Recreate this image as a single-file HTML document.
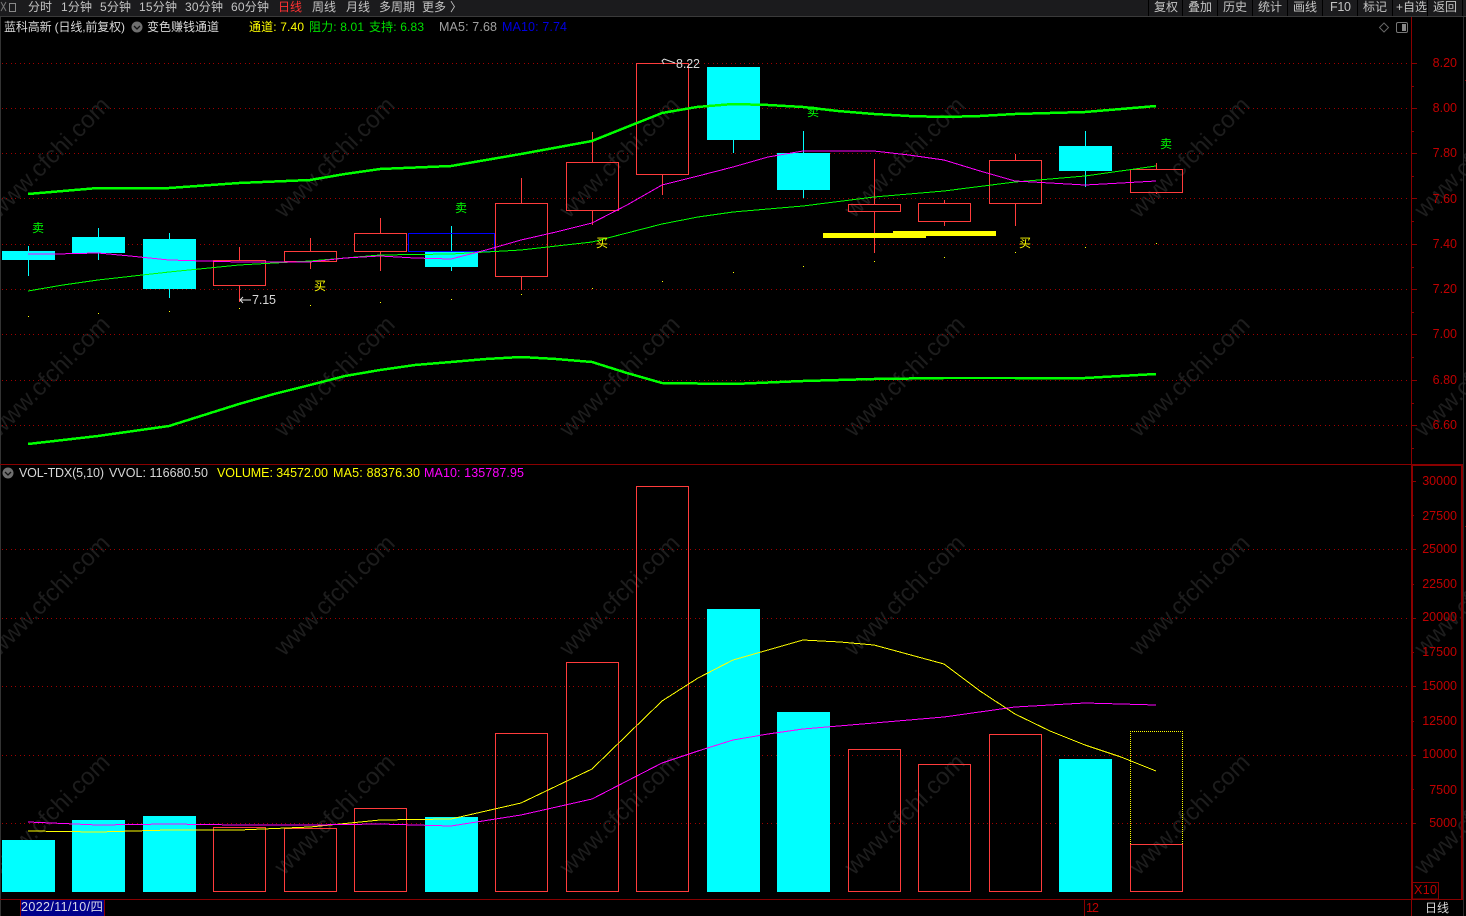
<!DOCTYPE html>
<html><head><meta charset="utf-8"><style>
html,body{margin:0;padding:0;background:#000;width:1466px;height:916px;overflow:hidden}
svg{display:block;position:absolute;left:0;top:0}
text{font-family:"Liberation Sans","Noto Sans CJK SC",sans-serif;font-size:12px}
.l{font-size:12.5px}
.wm text{font-size:24px;fill:#1d1d1d}
.tb{fill:#c4c4c4}
.ax{fill:#c00000;font-size:12.5px}
.ax text{fill:#c00000;font-size:12.5px}
.g{stroke:#a00000;stroke-width:1;stroke-dasharray:1 3 1 4;fill:none}
.r{fill:none;stroke:#ff3c3c;stroke-width:1}
.c{fill:#0ff;stroke:none}
.cw{stroke:#0ff;stroke-width:1}
.rw{stroke:#ff3c3c;stroke-width:1}
.t{stroke:#8a0000;stroke-width:1}
</style></head><body>
<svg width="1466" height="916" viewBox="0 0 1466 916" xmlns="http://www.w3.org/2000/svg">
<g class="wm">
<text transform="translate(-1,219) rotate(-45)">www.cfchi.com</text>
<text transform="translate(284,219) rotate(-45)">www.cfchi.com</text>
<text transform="translate(569,219) rotate(-45)">www.cfchi.com</text>
<text transform="translate(854,219) rotate(-45)">www.cfchi.com</text>
<text transform="translate(1139,219) rotate(-45)">www.cfchi.com</text>
<text transform="translate(1424,219) rotate(-45)">www.cfchi.com</text>
<text transform="translate(-1,438) rotate(-45)">www.cfchi.com</text>
<text transform="translate(284,438) rotate(-45)">www.cfchi.com</text>
<text transform="translate(569,438) rotate(-45)">www.cfchi.com</text>
<text transform="translate(854,438) rotate(-45)">www.cfchi.com</text>
<text transform="translate(1139,438) rotate(-45)">www.cfchi.com</text>
<text transform="translate(1424,438) rotate(-45)">www.cfchi.com</text>
<text transform="translate(-1,657) rotate(-45)">www.cfchi.com</text>
<text transform="translate(284,657) rotate(-45)">www.cfchi.com</text>
<text transform="translate(569,657) rotate(-45)">www.cfchi.com</text>
<text transform="translate(854,657) rotate(-45)">www.cfchi.com</text>
<text transform="translate(1139,657) rotate(-45)">www.cfchi.com</text>
<text transform="translate(1424,657) rotate(-45)">www.cfchi.com</text>
<text transform="translate(-1,876) rotate(-45)">www.cfchi.com</text>
<text transform="translate(284,876) rotate(-45)">www.cfchi.com</text>
<text transform="translate(569,876) rotate(-45)">www.cfchi.com</text>
<text transform="translate(854,876) rotate(-45)">www.cfchi.com</text>
<text transform="translate(1139,876) rotate(-45)">www.cfchi.com</text>
<text transform="translate(1424,876) rotate(-45)">www.cfchi.com</text>
</g>

<!-- toolbar -->
<rect x="0" y="0" width="1466" height="16" fill="#1b1b1d"/>
<rect x="0" y="16" width="1466" height="1" fill="#3a3a3a"/>
<path d="M1 2l5 9M6 2l-5 9" fill="none" stroke="#777"/><rect x="9.500" y="3.500" width="6" height="8" fill="none" stroke="#888"/>
<g class="tb">
<text x="28" y="11">分时</text><text x="61" y="11" textLength="31">1分钟</text><text x="100" y="11" textLength="31">5分钟</text><text x="139" y="11" textLength="38">15分钟</text><text x="185" y="11" textLength="38">30分钟</text><text x="231" y="11" textLength="38">60分钟</text>
<text x="278" y="11" style="fill:#ff3232">日线</text>
<text x="312" y="11">周线</text><text x="346" y="11">月线</text><text x="379" y="11">多周期</text><text x="422" y="11">更多</text><text x="450" y="11">〉</text>
<text x="1154" y="11">复权</text><text x="1188" y="11">叠加</text><text x="1223" y="11">历史</text><text x="1258" y="11">统计</text><text x="1293" y="11">画线</text><text x="1330" y="11" textLength="21" class="l">F10</text><text x="1363" y="11">标记</text><text x="1396" y="11" textLength="31">+自选</text><text x="1433" y="11">返回</text>
</g>
<g stroke="#000" stroke-width="1" shape-rendering="crispEdges">
<path d="M1148.500 0V16M1182.500 0V16M1217.500 0V16M1252.500 0V16M1287.500 0V16M1322.500 0V16M1357.500 0V16M1392.500 0V16M1427.500 0V16M1462.500 0V16"/>
</g>

<g shape-rendering="crispEdges">
<!-- frame -->
<rect x="0" y="17" width="1" height="899" fill="#333"/>
<rect x="1463" y="17" width="1" height="899" fill="#2c2c2c"/>
<rect x="1465" y="80" width="1" height="1" fill="#8a0000"/>
<rect x="1465" y="526" width="1" height="1" fill="#8a0000"/>
<rect x="1411" y="17" width="1" height="447" fill="#8a0000"/>
<rect x="0" y="464" width="1463" height="1" fill="#8a0000"/>
<rect x="1411" y="464" width="2" height="435" fill="#8a0000"/>
<rect x="1411" y="465" width="51" height="1" fill="#8a0000"/>
<rect x="1461" y="465" width="2" height="434" fill="#8a0000"/>
<rect x="0" y="899" width="1463" height="1" fill="#8a0000"/>
<rect x="1411" y="899" width="1" height="17" fill="#8a0000"/>
<rect x="1084" y="900" width="1" height="16" fill="#8a0000"/>

<!-- grid -->
<path class="g" d="M2 63.500H1410M2 108.500H1410M2 153.500H1410M2 198.500H1410M2 244.500H1410M2 289.500H1410M2 334.500H1410M2 380.500H1410M2 425.500H1410"/>
<path class="g" d="M2 549.500H1408M2 618.500H1408M2 686.500H1408M2 755.500H1408M2 823.500H1408"/>

<!-- ticks -->
<path class="t" d="M1411 63.500h6M1411 86.500h3M1411 108.500h6M1411 131.500h3M1411 153.500h6M1411 176.500h3M1411 198.500h6M1411 221.500h3M1411 244.500h6M1411 267.500h3M1411 289.500h6M1411 312.500h3M1411 334.500h6M1411 357.500h3M1411 380.500h6M1411 403.500h3M1411 425.500h6M1411 448.500h3"/>
<path class="t" d="M1411 481.500h5M1411 515.500h3M1411 549.500h5M1411 584.500h3M1411 618.500h5M1411 652.500h3M1411 686.500h5M1411 721.500h3M1411 755.500h5M1411 789.500h3M1411 823.500h5"/>

<!-- price candles -->
<path class="cw" d="M28.500 246V276M98.500 228V260M169.500 233V298M451.500 226V271M733.500 140V153M803.500 131V198M1085.500 131V187"/>
<rect class="c" x="2" y="251" width="53" height="9"/>
<rect class="c" x="72" y="237" width="53" height="16"/>
<rect class="c" x="143" y="239" width="53" height="50"/>
<rect class="c" x="425" y="252" width="53" height="15"/>
<rect class="c" x="707" y="67" width="53" height="73"/>
<rect class="c" x="777" y="153" width="53" height="37"/>
<rect class="c" x="1059" y="146" width="53" height="25"/>
<path class="rw" d="M239.500 247V260M239.500 285V302M310.500 238V251M310.500 261V269M380.500 218V233M380.500 251V271M521.500 178V203M521.500 276V290M592.500 132V162M592.500 210V225M662.500 174V195M874.500 159V204M874.500 211V253M944.500 200V203M944.500 221V226M1015.500 154V160M1015.500 203V226M1156.500 163V169M1156.500 192V194"/>
<rect class="r" x="213.500" y="260.500" width="52" height="25"/>
<rect class="r" x="284.500" y="251.500" width="52" height="10"/>
<rect class="r" x="354.500" y="233.500" width="52" height="18"/>
<rect x="408.500" y="233.500" width="86" height="18" fill="none" stroke="#0000ff"/>
<rect class="r" x="495.500" y="203.500" width="52" height="73"/>
<rect class="r" x="566.500" y="162.500" width="52" height="48"/>
<rect class="r" x="636.500" y="63.500" width="52" height="111"/>
<rect class="r" x="848.500" y="204.500" width="52" height="7"/>
<rect class="r" x="918.500" y="203.500" width="52" height="18"/>
<rect class="r" x="989.500" y="160.500" width="52" height="43"/>
<rect class="r" x="1130.500" y="169.500" width="52" height="23"/>

<!-- yellow bars -->
<rect x="823" y="233" width="103" height="5" fill="#ff0"/>
<rect x="893" y="231" width="103" height="5" fill="#ff0"/>

<!-- yellow dots -->
<path fill="#ff0" d="M28 316h1v1h-1zM98 313h1v1h-1zM169 311h1v1h-1zM239 308h1v1h-1zM310 305h1v1h-1zM380 302h1v1h-1zM451 299h1v1h-1zM521 294h1v1h-1zM592 288h1v1h-1zM662 281h1v1h-1zM733 272h1v1h-1zM803 266h1v1h-1zM874 261h1v1h-1zM944 257h1v1h-1zM1015 252h1v1h-1zM1085 247h1v1h-1zM1156 243h1v1h-1z"/>

<!-- price lines -->
<polyline fill="none" stroke="#00ff00" stroke-width="2.500" points="28,194 63,191 98,188 169,188 239,183 310,180 345,174 380,169 451,166 521,154 592,141 627,127 662,113 697,107 733,104 768,105 803,107 838,111 874,114 909,116 944,117 980,116 1015,114 1085,112 1121,109 1156,106"/>
<polyline fill="none" stroke="#00ff00" stroke-width="2.500" points="28,444 98,436 169,426 204,415 239,404 274,394 310,385 345,376 380,370 415,365 451,362 486,359 521,357 556,359 592,362 627,373 662,383 733,384 803,381 874,379 944,378 1015,378 1085,378 1156,374"/>
<polyline fill="none" stroke="#00ff00" stroke-width="1" points="28,291 63,285 98,280 169,272 239,265 310,261 380,255 451,254 521,250 592,242 627,233 662,224 698,217 733,212 803,206 874,197 944,191 1015,182 1085,176 1156,166"/>
<polyline fill="none" stroke="#ff00ff" stroke-width="1" points="28,254 55,254 98,253 130,256 169,260 204,261 239,262 310,262 345,258 380,256 415,258 451,259 486,250 521,240 556,232 592,223 627,205 662,185 698,176 733,167 768,157 803,151 874,151 909,155 944,160 980,171 1015,181 1050,183 1085,185 1121,183 1156,181"/>

<!-- volume bars -->
<rect class="c" x="2" y="840" width="53" height="52"/>
<rect class="c" x="72" y="820" width="53" height="72"/>
<rect class="c" x="143" y="816" width="53" height="76"/>
<rect class="c" x="425" y="817" width="53" height="75"/>
<rect class="c" x="707" y="609" width="53" height="283"/>
<rect class="c" x="777" y="712" width="53" height="180"/>
<rect class="c" x="1059" y="759" width="53" height="133"/>
<rect class="r" x="213.500" y="827.500" width="52" height="64"/>
<rect class="r" x="284.500" y="828.500" width="52" height="63"/>
<rect class="r" x="354.500" y="808.500" width="52" height="83"/>
<rect class="r" x="495.500" y="733.500" width="52" height="158"/>
<rect class="r" x="566.500" y="662.500" width="52" height="229"/>
<rect class="r" x="636.500" y="486.500" width="52" height="405"/>
<rect class="r" x="848.500" y="749.500" width="52" height="142"/>
<rect class="r" x="918.500" y="764.500" width="52" height="127"/>
<rect class="r" x="989.500" y="734.500" width="52" height="157"/>
<path d="M1130 731.500H1183M1130.500 731V845M1182.500 731V845" fill="none" stroke="#ffff00" stroke-dasharray="1 1"/>
<rect class="r" x="1130.500" y="844.500" width="52" height="47"/>

<!-- volume lines -->
<polyline fill="none" stroke="#ffff00" stroke-width="1" points="28,831 98,832 169,830 239,830 310,827 380,820 451,819 521,803 592,769 627,735 662,701 698,678 733,660 768,650 803,640 840,642 874,645 944,664 980,691 1015,714 1050,731 1085,745 1121,757 1156,771"/>
<polyline fill="none" stroke="#ff00ff" stroke-width="1" points="28,822 98,825 169,824 239,825 310,825 380,824 451,826 521,815 592,799 627,781 662,763 698,751 733,740 768,734 803,729 874,723 944,717 1015,707 1085,703 1121,704 1156,705"/>

<!-- X10 box -->
<rect x="1412.500" y="882.500" width="26" height="16.500" fill="none" stroke="#8a0000"/>

<!-- date box -->
<rect x="20" y="900" width="85" height="16" fill="#00008b"/>
<rect x="20" y="900" width="1" height="16" fill="#8a0000"/>
<rect x="104" y="900" width="1" height="16" fill="#8a0000"/>
</g>

<!-- signals -->
<text x="32" y="232" fill="#00ff00">卖</text>
<text x="455" y="212" fill="#00ff00">卖</text>
<text x="807" y="116" fill="#00ff00">卖</text>
<text x="1160" y="148" fill="#00ff00">卖</text>
<text x="314" y="290" fill="#ffff00">买</text>
<text x="596" y="247" fill="#ffff00">买</text>
<text x="1019" y="247" fill="#ffff00">买</text>

<!-- annotations -->
<text x="252" y="304" class="l" fill="#d8d8d8" textLength="24">7.15</text>
<path d="M251 300H240M243 297L240 300L243 303" fill="none" stroke="#e0e0e0"/>
<text x="676" y="68" class="l" fill="#d8d8d8" textLength="24">8.22</text>
<path d="M675 63L664 59M664 59L662 61L664 64" fill="none" stroke="#e0e0e0"/>

<!-- legend top -->
<text x="4" y="31" fill="#d8d8d8" textLength="121">蓝科高新 (日线,前复权)</text>
<circle cx="137" cy="27" r="5.500" fill="#6f6f6f"/><path d="M134 26l3 3 3-3" fill="none" stroke="#111" stroke-width="1.300"/>
<text x="147" y="31" fill="#d8d8d8">变色赚钱通道</text>
<text x="249" y="31" fill="#ffff00" textLength="55">通道: 7.40</text>
<text x="309" y="31" fill="#00e000" textLength="55">阻力: 8.01</text>
<text x="369" y="31" fill="#00e000" textLength="55">支持: 6.83</text>
<text x="439" y="31" class="l" fill="#a0a0a0" textLength="58">MA5: 7.68</text>
<text x="502" y="31" class="l" fill="#0000e0" textLength="65">MA10: 7.74</text>
<path d="M1384 23l4.500 4.500-4.500 4.500-4.500-4.500z" fill="none" stroke="#666"/>
<rect x="1396.500" y="22.500" width="11" height="10" rx="1.500" fill="none" stroke="#777"/><rect x="1402" y="24" width="4" height="7" fill="#888"/>

<!-- legend volume -->
<circle cx="8" cy="473" r="5.500" fill="#6f6f6f"/><path d="M5 472l3 3 3-3" fill="none" stroke="#111" stroke-width="1.300"/>
<text x="19" y="477" class="l" fill="#d8d8d8" textLength="85">VOL-TDX(5,10)</text>
<text x="109" y="477" class="l" fill="#d8d8d8" textLength="99">VVOL: 116680.50</text>
<text x="217" y="477" class="l" fill="#ffff00" textLength="111">VOLUME: 34572.00</text>
<text x="333" y="477" class="l" fill="#ffff00" textLength="87">MA5: 88376.30</text>
<text x="424" y="477" class="l" fill="#ff00ff" textLength="100">MA10: 135787.95</text>

<!-- axis labels -->
<g class="ax" text-anchor="end">
<text x="1457" y="67">8.20</text><text x="1457" y="112">8.00</text><text x="1457" y="157">7.80</text><text x="1457" y="203">7.60</text><text x="1457" y="248">7.40</text><text x="1457" y="293">7.20</text><text x="1457" y="338">7.00</text><text x="1457" y="384">6.80</text><text x="1457" y="429">6.60</text>
<text x="1457" y="485">30000</text><text x="1457" y="520">27500</text><text x="1457" y="553">25000</text><text x="1457" y="588">22500</text><text x="1457" y="621">20000</text><text x="1457" y="656">17500</text><text x="1457" y="690">15000</text><text x="1457" y="725">12500</text><text x="1457" y="758">10000</text><text x="1457" y="794">7500</text><text x="1457" y="827">5000</text>
</g>
<text x="1414" y="894" class="ax" textLength="23">X10</text>
<text x="1086" y="912" class="ax" textLength="13">12</text>
<text x="21" y="911" class="l" fill="#d8d8e8" textLength="82">2022/11/10/四</text>
<text x="1425" y="912" fill="#d8d8d8">日线</text>
</svg>
</body></html>
